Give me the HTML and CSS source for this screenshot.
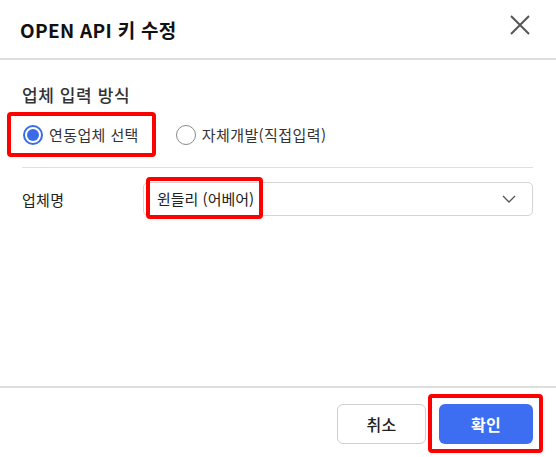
FILE: index.html
```html
<!DOCTYPE html>
<html lang="ko">
<head>
    <meta charset="UTF-8">
    <meta name="viewport" content="width=device-width, initial-scale=1.0">
    <title>OPEN API 키 수정</title>
    <link rel="stylesheet" href="styles.css">
</head>
<body>
    <div class="dialog">
        <!-- Header -->
        <div class="dialog-header">
            <h1 class="dialog-title">OPEN API 키 수정</h1>
            <button class="close-btn" type="button" aria-label="닫기">
                <svg width="20" height="20" viewBox="0 0 20 20">
                    <path d="M1 1 L19 19 M19 1 L1 19" stroke="#555" stroke-width="2" fill="none"/>
                </svg>
            </button>
        </div>

        <!-- Body -->
        <div class="dialog-body">
            <div class="section-label">업체 입력 방식</div>
            <div class="radio-group">
                <label class="radio-option marked marked-radio">
                    <span class="radio checked"></span>
                    <span>연동업체 선택</span>
                </label>
                <label class="radio-option">
                    <span class="radio"></span>
                    <span>자체개발(직접입력)</span>
                </label>
            </div>

            <hr class="divider">

            <div class="form-row">
                <div class="form-label">업체명</div>
                <div class="select">
                    <span class="select-value marked marked-select">윈들리 (어베어)</span>
                    <svg width="14" height="8" viewBox="0 0 14 8">
                        <path d="M1 1 L7 7 L13 1" stroke="#555" stroke-width="1.3" fill="none"/>
                    </svg>
                </div>
            </div>
        </div>

        <!-- Footer -->
        <div class="dialog-footer">
            <button class="btn btn-cancel" type="button">취소</button>
            <button class="btn btn-confirm marked marked-btn" type="button">확인</button>
        </div>
    </div>
</body>
</html>
```

FILE: styles.css
```css
/* General Page Styling */
body {
    font-family: "Noto Sans CJK KR", "Noto Sans", sans-serif;
    background-color: #fff;
    color: #222;
    margin: 0;
    padding: 0;
}

.dialog {
    height: 457px;
    display: flex;
    flex-direction: column;
    background-color: #fff;
}

/* Header */
.dialog-header {
    height: 58px;
    padding: 0 26px 0 20px;
    display: flex;
    align-items: center;
    justify-content: space-between;
    border-bottom: 2px solid #dedede;
}

.dialog-title {
    margin: 0;
    font-size: 19px;
    letter-spacing: 0.3px;
    font-weight: bold;
    color: #111;
}

.close-btn {
    align-self: flex-start;
    margin-top: 15px;
    padding: 0;
    border: none;
    background: none;
    width: 20px;
    height: 20px;
    cursor: pointer;
}

.close-btn svg {
    display: block;
}

/* Body */
.dialog-body {
    flex: 1;
    padding: 23px 23px 0 22px;
}

.section-label {
    font-size: 17px;
    letter-spacing: 0.6px;
    line-height: 24px;
    font-weight: 500;
    color: #333;
}

.radio-group {
    display: flex;
    align-items: center;
    gap: 37px;
    margin-top: 18px;
    padding-left: 1px;
}

.radio-option {
    display: flex;
    align-items: center;
    gap: 6px;
    font-size: 15px;
    letter-spacing: 0.4px;
    line-height: 20px;
    color: #333;
    cursor: pointer;
}

.radio {
    box-sizing: border-box;
    width: 20px;
    height: 20px;
    border-radius: 50%;
    border: 1.5px solid #8a8a8a;
    display: flex;
    align-items: center;
    justify-content: center;
}

.radio.checked {
    border: 2px solid #3b6ce8;
}

.radio.checked::after {
    content: "";
    width: 12px;
    height: 12px;
    border-radius: 50%;
    background-color: #3b6ce8;
}

.divider {
    border: none;
    border-top: 1px solid #e0e0e0;
    margin: 22px 0 0 0;
}

.form-row {
    display: flex;
    align-items: center;
    margin-top: 14px;
}

.form-label {
    width: 121px;
    font-size: 15px;
    letter-spacing: 0.3px;
    color: #222;
}

.select {
    flex: 1;
    height: 34px;
    box-sizing: border-box;
    border: 1px solid #d4d4d4;
    border-radius: 5px;
    padding: 0 16px 0 13px;
    display: flex;
    align-items: center;
    justify-content: space-between;
}

.select-value {
    font-size: 15px;
    line-height: 20px;
    color: #222;
}

/* Footer */
.dialog-footer {
    border-top: 2px solid #dedede;
    padding: 16px 23px 13px;
    display: flex;
    justify-content: flex-end;
    gap: 13px;
}

.btn {
    height: 40px;
    border-radius: 6px;
    font-family: inherit;
    font-size: 16px;
    letter-spacing: 0.3px;
    cursor: pointer;
}

.btn-cancel {
    width: 89px;
    background-color: #fff;
    border: 1px solid #cfcfcf;
    color: #222;
    font-weight: 500;
}

.btn-confirm {
    width: 94px;
    background-color: #3d6ef2;
    border: none;
    color: #fff;
    font-weight: bold;
}

/* Red highlight boxes drawn over the content */
.marked {
    position: relative;
}

.marked::before {
    content: "";
    position: absolute;
    border: 4px solid #f00;
    border-radius: 4px;
    pointer-events: none;
}

.marked-radio::before {
    top: -13px;
    bottom: -12px;
    left: -16px;
    right: -17px;
}

.marked-select::before {
    top: -12px;
    bottom: -10px;
    left: -11px;
    right: -9px;
}

.marked-btn::before {
    top: -10px;
    bottom: -9px;
    left: -11px;
    right: -10px;
}
```
